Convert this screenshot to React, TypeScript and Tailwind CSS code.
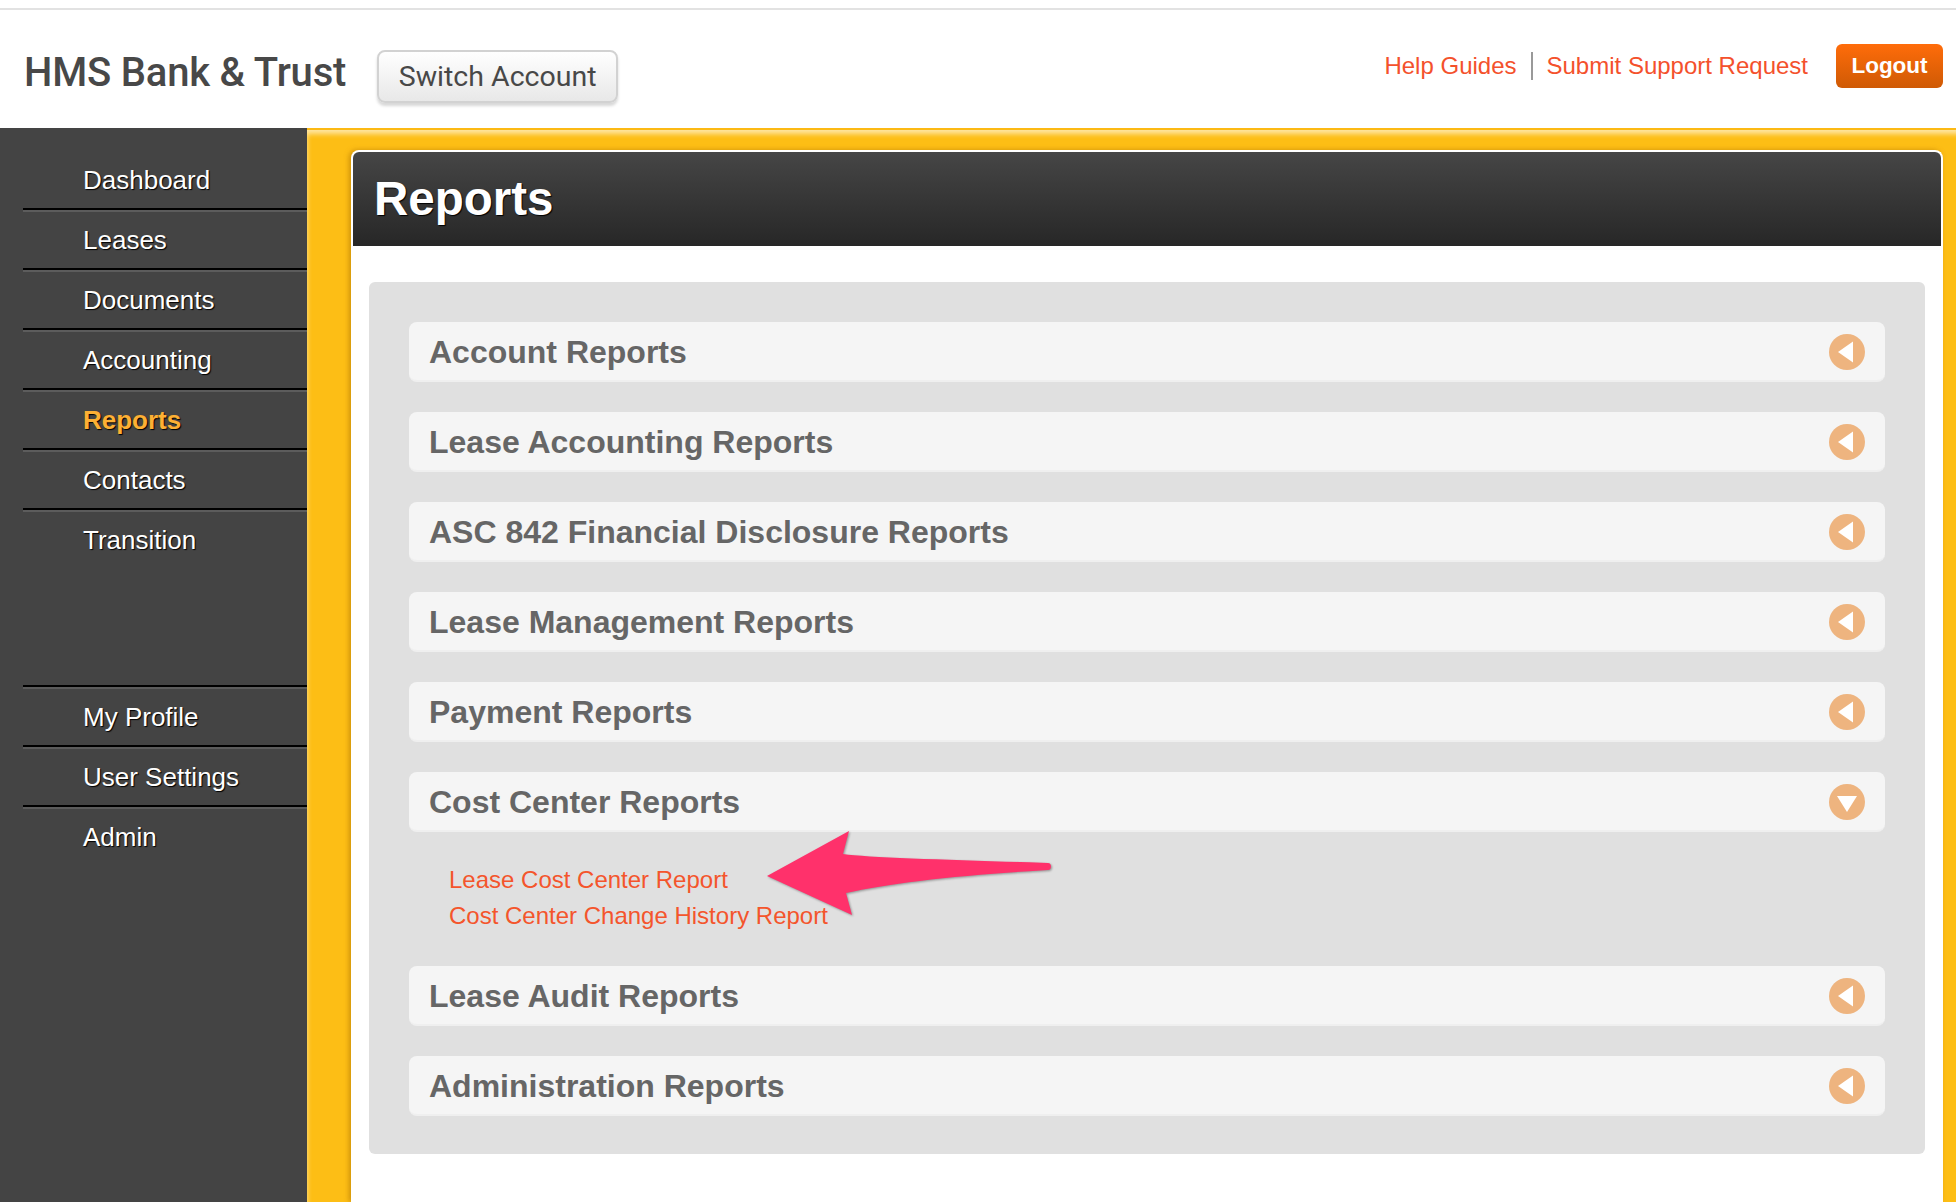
import React from "react";

const mainNav = ["Dashboard", "Leases", "Documents", "Accounting", "Reports", "Contacts", "Transition"];
const userNav = ["My Profile", "User Settings", "Admin"];

const topSections = [
  "Account Reports",
  "Lease Accounting Reports",
  "ASC 842 Financial Disclosure Reports",
  "Lease Management Reports",
  "Payment Reports",
];
const bottomSections = ["Lease Audit Reports", "Administration Reports"];

function NavRow({ label, last }: { label: string; last?: boolean }) {
  const active = label === "Reports";
  return (
    <li
      className={`flex h-[60px] items-center border-b-2 pt-[2px] pl-[60px] text-[26px] [text-shadow:1px_1px_1px_#000] ${
        last ? "border-transparent" : "border-black shadow-[0_2px_0_#5c5c5c]"
      } ${active ? "font-bold text-[#fdb034]" : "text-white"}`}
    >
      {label}
    </li>
  );
}

function Chevron({ open }: { open?: boolean }) {
  return (
    <svg width="36" height="36" viewBox="0 0 36 36">
      <circle cx="18" cy="18" r="18" fill="#eeb47f" />
      {open ? (
        <polygon points="8,12 28,12 18,28" fill="#fff" />
      ) : (
        <polygon points="9,18 24,7.5 24,28.5" fill="#fff" />
      )}
    </svg>
  );
}

function SectionRow({ title, open }: { title: string; open?: boolean }) {
  return (
    <div className="flex h-[60px] items-center justify-between rounded-lg border-b-2 border-[#efefef] bg-[#f5f5f5] px-5 pt-[2px]">
      <span className="text-[32px] font-bold text-[#666]">{title}</span>
      <Chevron open={open} />
    </div>
  );
}

function App() {
  return (
    <div className="flex h-[1202px] flex-col overflow-hidden bg-white font-['Liberation_Sans',Arial,sans-serif]">
      {/* top bar */}
      <header className="h-[128px] shrink-0 pt-2">
        <div className="h-[2px] bg-[#e2e2e2]" />
        <div className="flex items-start justify-between pr-[13px] pl-6">
          <div className="flex items-start">
            <h1 className="mt-[37px] font-['Roboto',sans-serif] text-[40px] leading-[52px] font-medium tracking-[-0.2px] text-[#484848]">
              HMS Bank &amp; Trust
            </h1>
            <button className="mt-[40px] ml-[31px] h-[53px] w-[241px] rounded-lg border-2 border-[#d2d2d2] bg-gradient-to-b from-white to-[#e8e8e8] pt-[2px] font-['Roboto',sans-serif] text-[28.5px] text-[#484848] shadow-[0_3px_3px_#d8d8d8]">
              Switch Account
            </button>
          </div>
          <div className="flex items-center pt-[34px]">
            <a className="text-[24px] text-[#f4512c]">Help Guides</a>
            <span className="mx-[14px] h-7 w-[2px] bg-[#999]" />
            <a className="text-[24px] text-[#f4512c]">Submit Support Request</a>
            <button className="ml-7 h-11 w-[107px] rounded-md bg-gradient-to-b from-[#ff6c0a] to-[#cf5a05] text-[22.5px] font-bold text-white">
              Logout
            </button>
          </div>
        </div>
      </header>

      <div className="flex min-h-0 flex-1">
        {/* sidebar */}
        <nav className="w-[307px] shrink-0 bg-[#444] pt-[22px] pl-[23px]">
          <ul>
            {mainNav.map((item) => (
              <NavRow key={item} label={item} last={item === "Transition"} />
            ))}
          </ul>
          <div className="mt-[115px] h-[2px] bg-black shadow-[0_2px_0_#5c5c5c]" />
          <ul>
            {userNav.map((item) => (
              <NavRow key={item} label={item} last={item === "Admin"} />
            ))}
          </ul>
        </nav>

        {/* yellow frame */}
        <main className="flex-1 border-t-2 border-[#fcb914] bg-[#fdbe15] pt-5 pr-[13px] pl-[44px] shadow-[inset_3px_7px_5px_-3px_rgba(255,255,255,0.6)]">
          <div className="h-full rounded-t-lg border-2 border-b-0 border-white bg-white shadow-[-2px_0_5px_rgba(170,110,0,0.55)]">
            <div className="flex h-[94px] items-center rounded-t-md bg-gradient-to-b from-[#464646] to-[#272727] pl-[21px]">
              <h2 className="text-[47.5px] font-bold text-white [text-shadow:1px_1px_1px_#000]">Reports</h2>
            </div>
            <div className="mx-4 mt-9 flex flex-col gap-[30px] rounded-md bg-[#e0e0e0] px-10 pt-10 pb-[38px]">
              {topSections.map((title) => (
                <SectionRow key={title} title={title} />
              ))}
              <div>
                <SectionRow title="Cost Center Reports" open />
                <div className="relative flex flex-col pt-[30px] pb-[2px] pl-10 text-[24px] leading-[36px] text-[#f4552c]">
                  <a>Lease Cost Center Report</a>
                  <a>Cost Center Change History Report</a>
                  {/* annotation arrow */}
                  <svg
                    className="absolute top-[-7px] left-[351px] drop-shadow-[1px_1px_1px_rgba(0,0,0,0.35)]"
                    width="300"
                    height="100"
                    viewBox="0 0 300 100"
                  >
                    <path
                      d="M7 51 L89 6 L83 29 C110 33 200 35 288 38 C292 38 292 45 288 45 C200 50 130 58 86 68 L92 90 Z"
                      fill="#ff316b"
                    />
                  </svg>
                </div>
              </div>
              {bottomSections.map((title) => (
                <SectionRow key={title} title={title} />
              ))}
            </div>
          </div>
        </main>
      </div>
    </div>
  );
}

export default App;
